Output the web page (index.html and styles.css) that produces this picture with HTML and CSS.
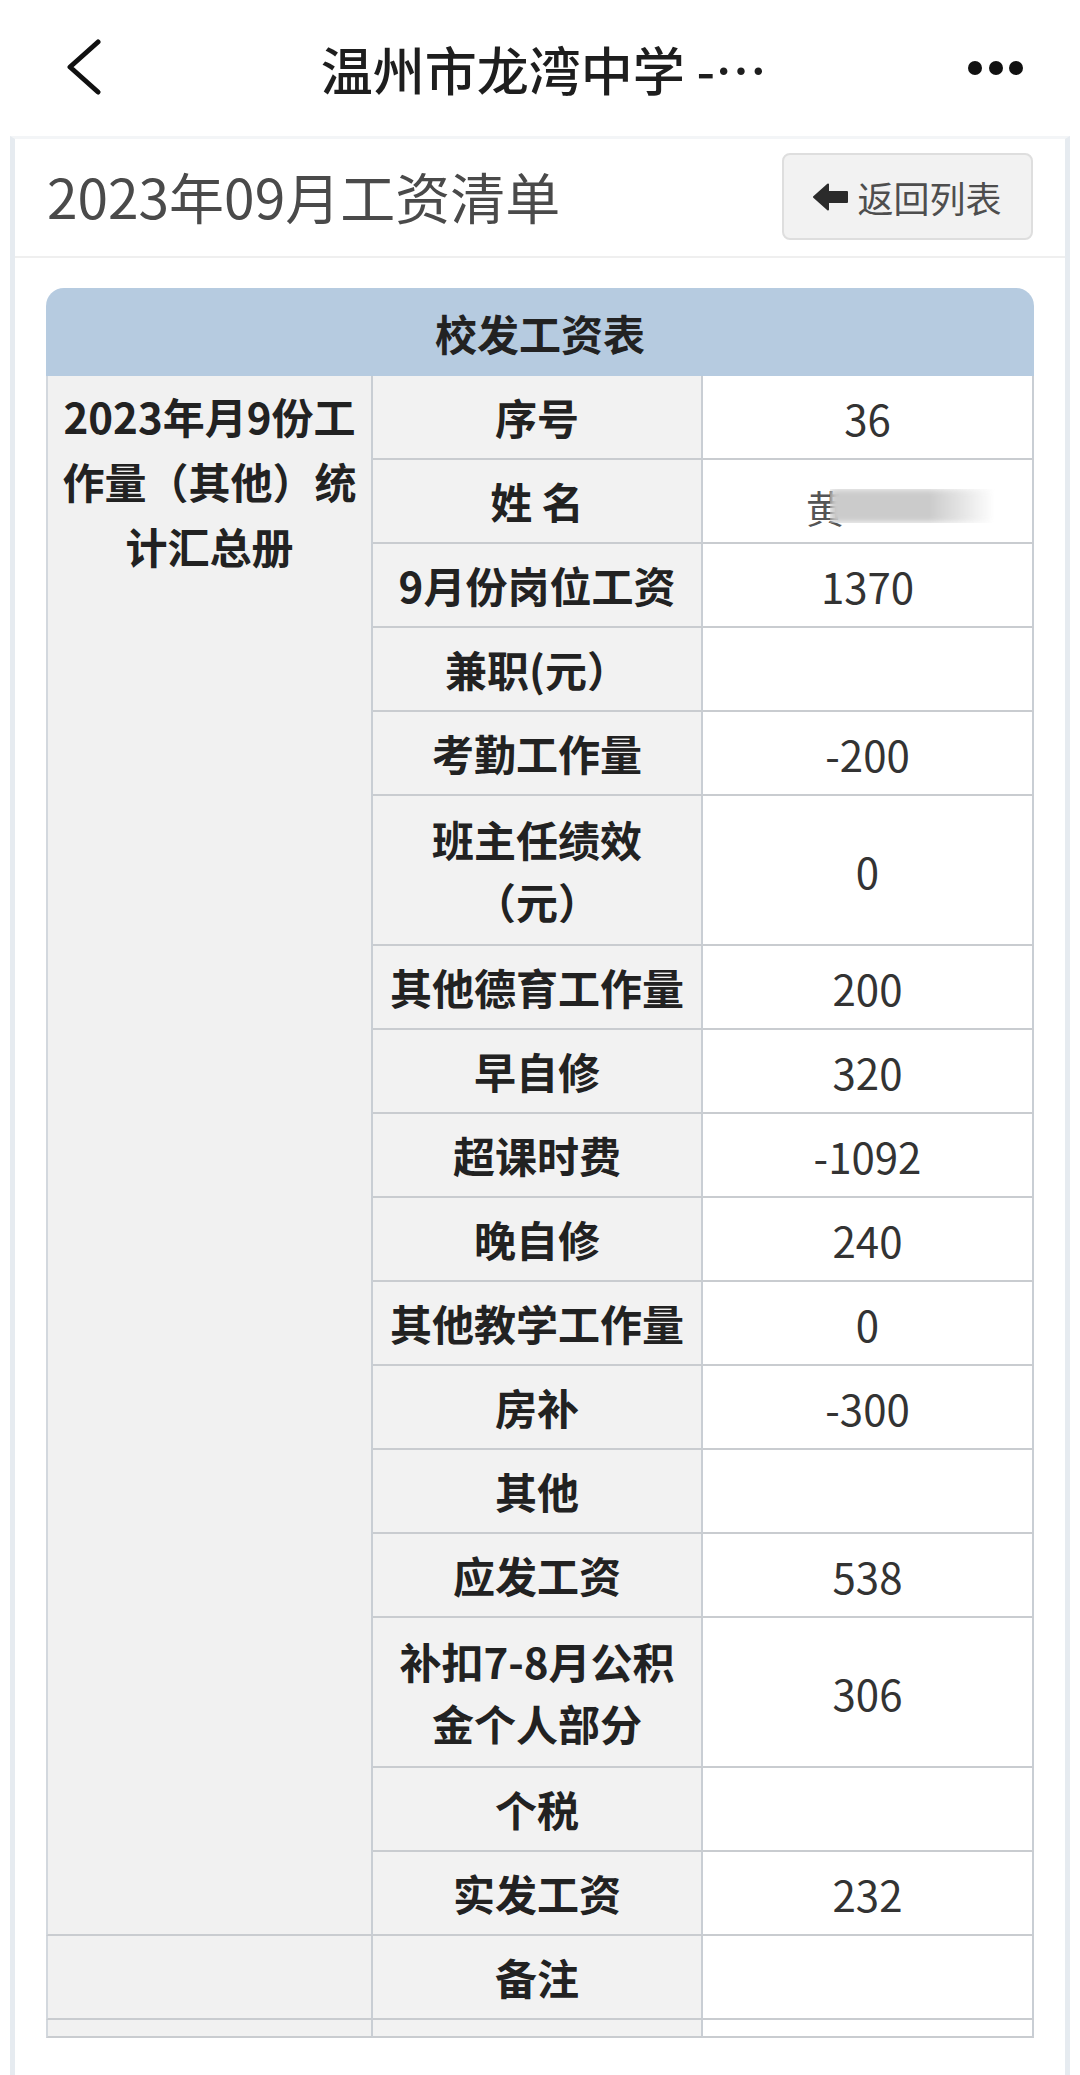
FILE: index.html
```html
<!DOCTYPE html>
<html lang="zh-CN">
<head>
<meta charset="utf-8">
<title>2023年09月工资清单</title>
<link rel="stylesheet" href="styles.css">
</head>
<body>
<header class="topbar">
  <div class="tb-left">
    <svg class="chev" width="40" height="60" viewBox="0 0 40 60"><path d="M34 3 L6 28 L34 53" fill="none" stroke="#111" stroke-width="5" stroke-linecap="round" stroke-linejoin="round"/></svg>
  </div>
  <div class="tb-title">温州市龙湾中学 -…</div>
  <div class="tb-right">
    <svg class="dots" width="62" height="20" viewBox="0 0 62 20"><circle cx="10" cy="10" r="7" fill="#111"/><circle cx="31" cy="10" r="7" fill="#111"/><circle cx="51" cy="10" r="7" fill="#111"/></svg>
  </div>
</header>
<main class="page">
  <div class="head">
    <h1 class="title">2023年09月工资清单</h1>
    <button class="back-btn"><svg class="arrow" width="36" height="30" viewBox="0 0 36 30"><path d="M1 15 L15 2.5 L15 10 L34 10 L34 20 L15 20 L15 27.5 Z" fill="#2b2b2b" stroke="#2b2b2b" stroke-width="2" stroke-linejoin="round"/></svg><span>返回列表</span></button>
  </div>
  <table class="sheet">
    <colgroup><col class="c1"><col class="c2"><col class="c3"></colgroup>
    <thead>
      <tr><th colspan="3" class="cap">校发工资表</th></tr>
    </thead>
    <tbody>
      <tr><td rowspan="17" class="group">2023年月9份工<br>作量（其他）统<br>计汇总册</td><td class="lbl">序号</td><td class="val">36</td></tr>
      <tr><td class="lbl">姓&nbsp;名</td><td class="val name-cell"><span class="name">黄</span><span class="blur"></span></td></tr>
      <tr><td class="lbl">9月份岗位工资</td><td class="val">1370</td></tr>
      <tr><td class="lbl">兼职(元）</td><td class="val"></td></tr>
      <tr><td class="lbl">考勤工作量</td><td class="val">-200</td></tr>
      <tr class="tall"><td class="lbl">班主任绩效<br>（元）</td><td class="val">0</td></tr>
      <tr><td class="lbl">其他德育工作量</td><td class="val">200</td></tr>
      <tr><td class="lbl">早自修</td><td class="val">320</td></tr>
      <tr><td class="lbl">超课时费</td><td class="val">-1092</td></tr>
      <tr><td class="lbl">晚自修</td><td class="val">240</td></tr>
      <tr><td class="lbl">其他教学工作量</td><td class="val">0</td></tr>
      <tr><td class="lbl">房补</td><td class="val">-300</td></tr>
      <tr><td class="lbl">其他</td><td class="val"></td></tr>
      <tr><td class="lbl">应发工资</td><td class="val">538</td></tr>
      <tr class="tall"><td class="lbl">补扣7-8月公积<br>金个人部分</td><td class="val">306</td></tr>
      <tr><td class="lbl">个税</td><td class="val"></td></tr>
      <tr><td class="lbl">实发工资</td><td class="val">232</td></tr>
      <tr><td class="group-empty"></td><td class="lbl">备注</td><td class="val"></td></tr>
      <tr class="thin"><td class="group-empty"></td><td class="lbl"></td><td class="val"></td></tr>
    </tbody>
  </table>
</main>
</body>
</html>
```
FILE: styles.css
```css
html, body {
  margin: 0;
  padding: 0;
  background: #fff;
}
body {
  width: 1080px;
  height: 2075px;
  overflow: hidden;
  font-family: "Noto Sans CJK SC", "Noto Sans", sans-serif;
  color: #222;
}
.topbar {
  height: 136px;
  display: grid;
  grid-template-columns: 150px 1fr 150px;
  align-items: center;
  background: #fff;
}
.tb-left {
  display: flex;
  align-items: center;
}
.chev {
  margin-left: 64px;
  margin-top: 2px;
}
.tb-title {
  text-align: center;
  font-size: 52px;
  font-weight: 500;
  color: #1e1e1e;
  white-space: nowrap;
  letter-spacing: 0;
  margin-left: 8px;
}
.tb-right {
  display: flex;
  align-items: center;
}
.dots {
  margin-left: 35px;
}
.page {
  margin: 0 10px;
  border-left: 5px solid #e6ebf0;
  border-right: 5px solid #e6ebf0;
  border-top: 3px solid #f3f5f7;
  min-height: 1940px;
  box-sizing: border-box;
  background: #fff;
}
.head {
  height: 119px;
  box-sizing: border-box;
  padding: 0 32px 6px 32px;
  display: flex;
  align-items: center;
  justify-content: space-between;
  border-bottom: 2px solid #efefef;
}
.title {
  margin: 0;
  font-size: 55px;
  font-weight: 400;
  color: #4a4a4a;
  letter-spacing: 0;
}
.back-btn {
  width: 251px;
  height: 87px;
  box-sizing: border-box;
  background: #f2f2f2;
  border: 2px solid #dedede;
  border-radius: 8px;
  display: flex;
  align-items: center;
  justify-content: center;
  gap: 8px;
  padding: 0;
  font-family: inherit;
  font-size: 36px;
  color: #4e4e4e;
  margin-top: 4px;
}
.back-btn span {
  line-height: 1;
}
.sheet {
  margin: 30px 0 0 31px;
  width: 988px;
  border-collapse: separate;
  border-spacing: 0;
  table-layout: fixed;
}
.c1 { width: 327px; }
.c2 { width: 330px; }
.c3 { width: 331px; }
.cap {
  height: 88px;
  box-sizing: border-box;
  background: #b6cbe0;
  border-radius: 18px 18px 0 0;
  font-size: 42px;
  font-weight: 700;
  color: #222;
  padding: 0;
}
.sheet td {
  box-sizing: border-box;
  height: 84px;
  padding: 0;
  text-align: center;
  vertical-align: middle;
  border-right: 2px solid #c9ced4;
  border-bottom: 2px solid #c9ccd0;
  font-size: 42px;
}
.sheet .group {
  vertical-align: top;
  background: #f1f1f1;
  font-weight: 700;
  line-height: 65px;
  padding-top: 7px;
  color: #222;
  border-left: 2px solid #d3d8de;
}
.sheet .group-empty {
  background: #f1f1f1;
  border-left: 2px solid #d3d8de;
}
.sheet .lbl {
  background: #f2f2f2;
  font-weight: 700;
  color: #222;
  line-height: 62px;
}
.sheet .val {
  background: #fff;
  color: #333;
  font-weight: 400;
}
.sheet tr.tall td {
  height: 150px;
}
.sheet tr.thin td {
  height: 18px;
}
.sheet .name-cell {
  text-align: left;
  padding-left: 103px;
}
.name {
  color: #555;
  font-size: 38px;
  display: inline-block;
  vertical-align: middle;
}
.blur {
  display: inline-block;
  vertical-align: middle;
  width: 165px;
  height: 34px;
  margin-left: -14px;
  background: repeating-linear-gradient(180deg, #b8b8b8 0px, #dadada 4px, #c2c2c2 7px);
  filter: blur(3px);
  -webkit-mask-image: linear-gradient(90deg, #000 0%, #000 60%, transparent 100%);
  mask-image: linear-gradient(90deg, #000 0%, #000 60%, transparent 100%);
}
```
